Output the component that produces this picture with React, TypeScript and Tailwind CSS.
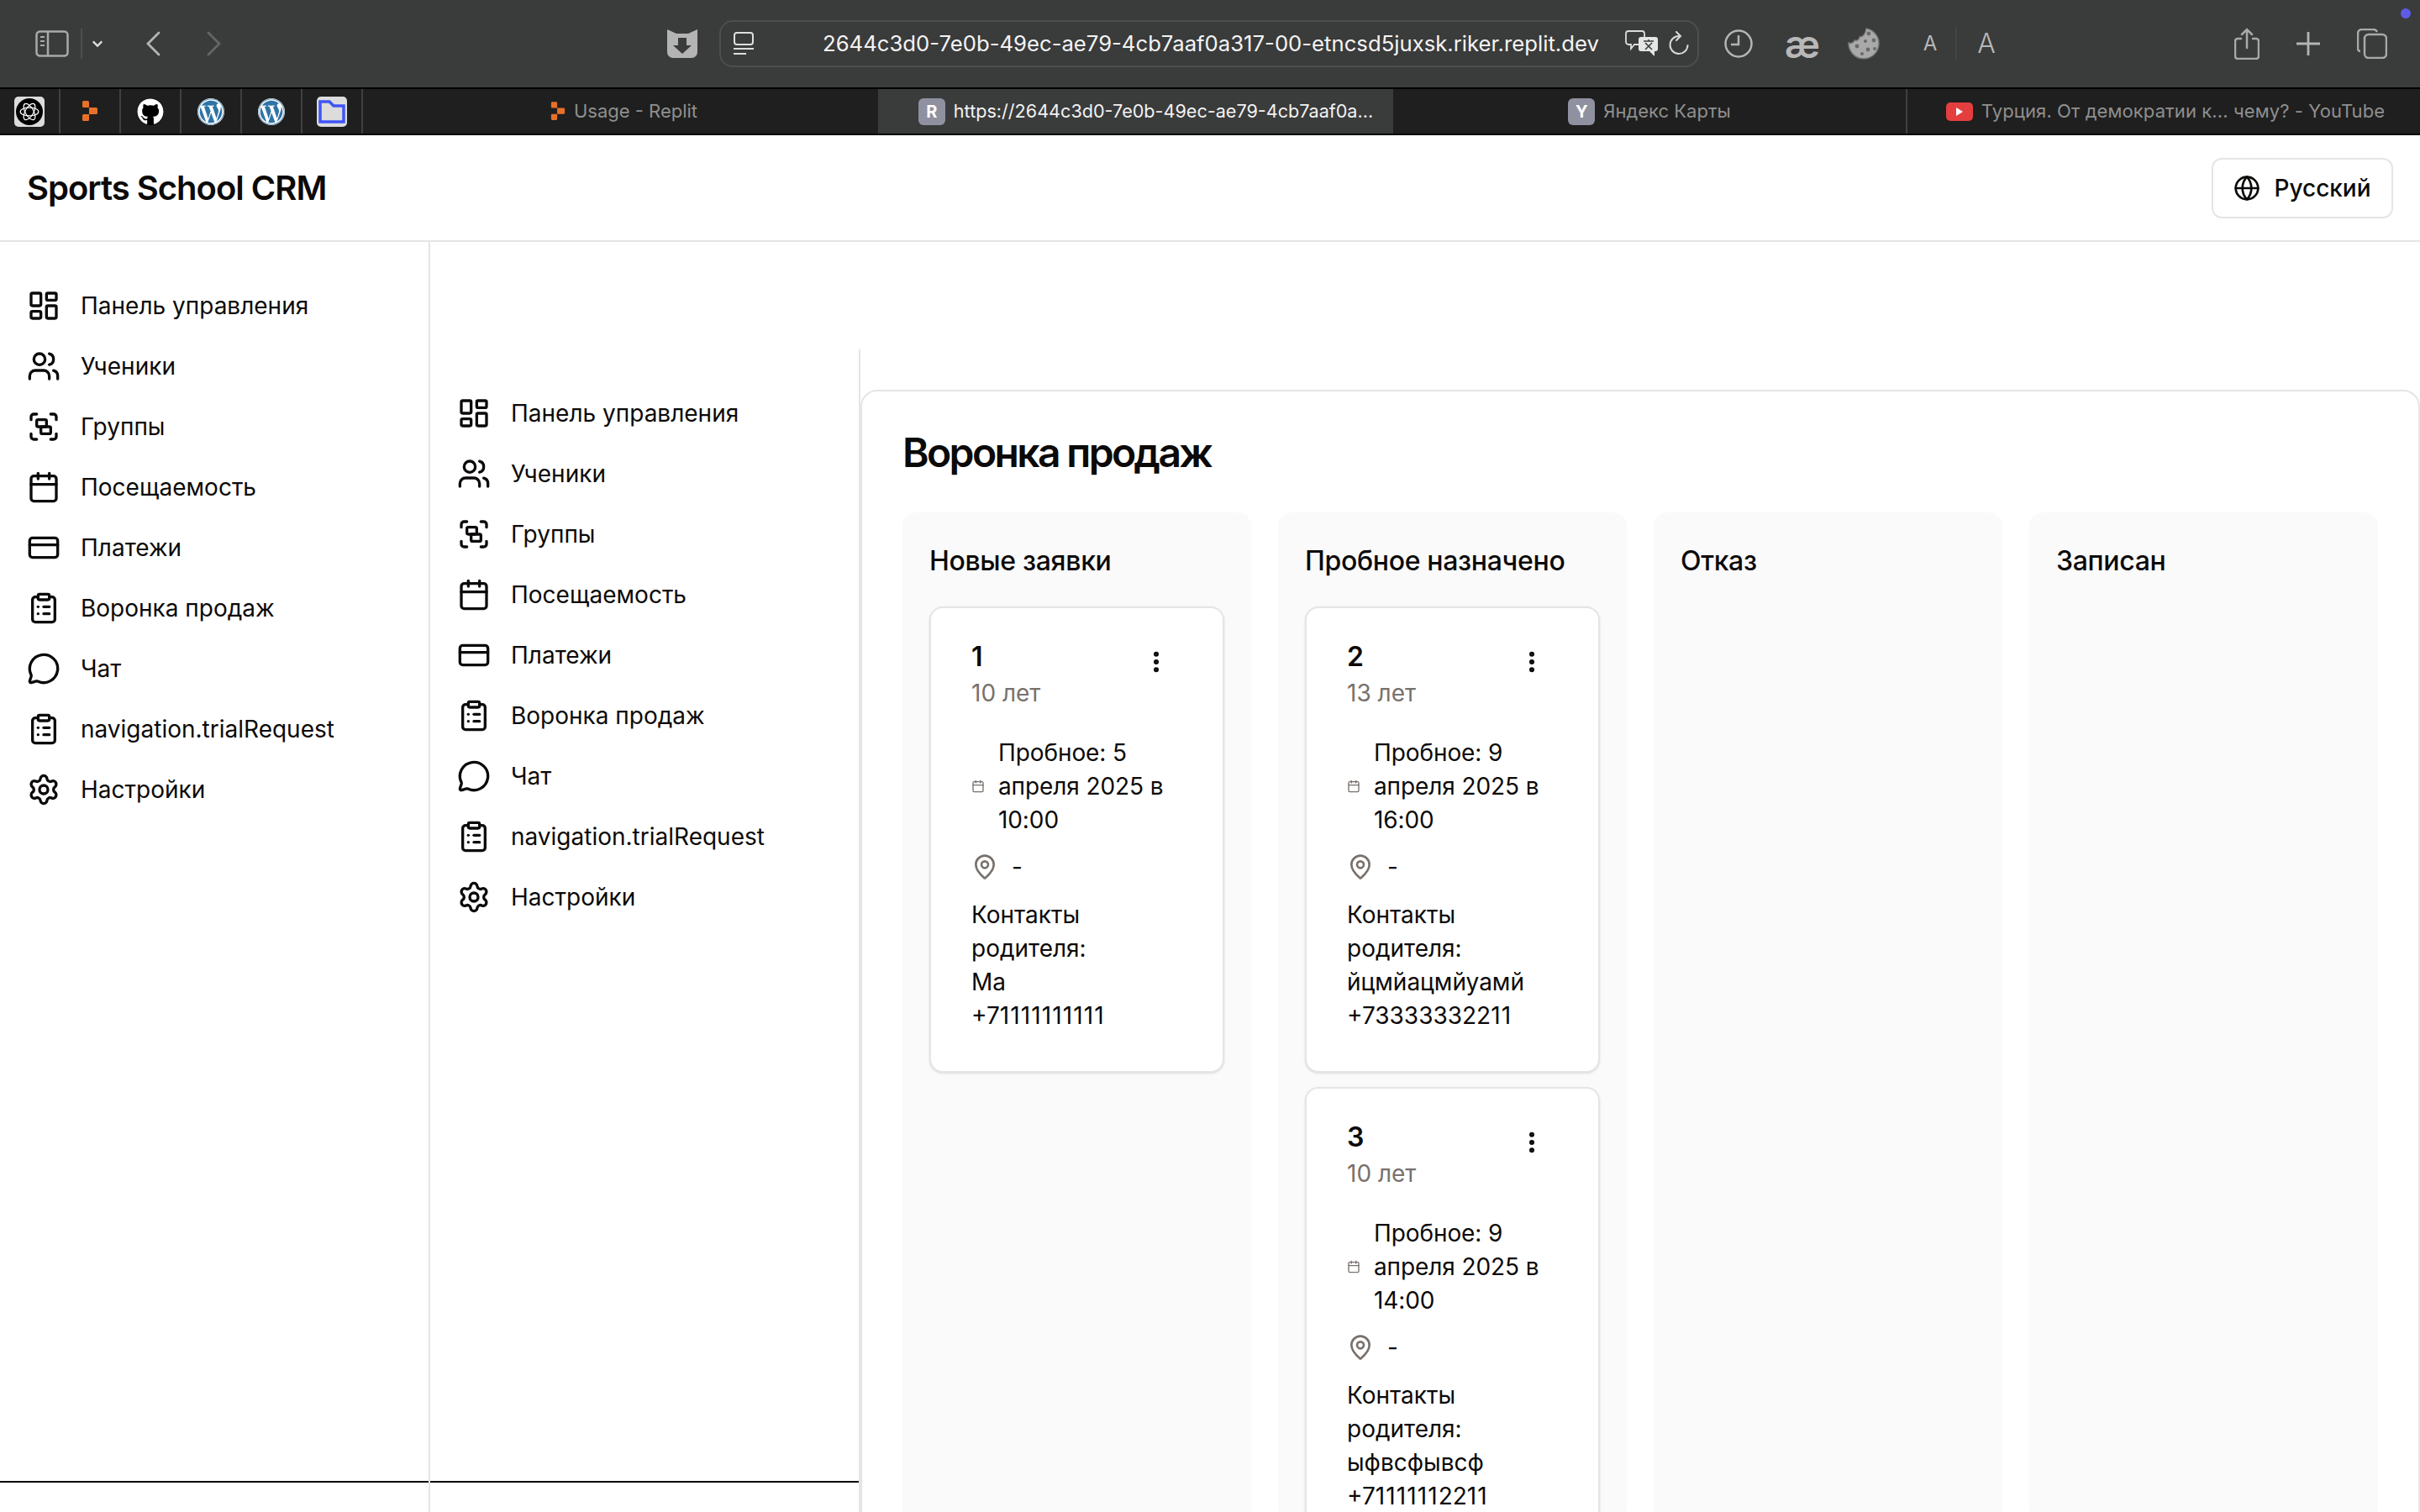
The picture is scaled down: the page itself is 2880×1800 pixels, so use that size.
import {
  Calendar,
  ClipboardList,
  CreditCard,
  Globe,
  Group,
  LayoutDashboard,
  MapPin,
  MessageCircle,
  MoreVertical,
  Settings,
  Users,
} from 'lucide-react'
import { FaGithub, FaWordpress } from 'react-icons/fa'

const NAV_ITEMS = [
  { icon: LayoutDashboard, label: 'Панель управления' },
  { icon: Users, label: 'Ученики' },
  { icon: Group, label: 'Группы' },
  { icon: Calendar, label: 'Посещаемость' },
  { icon: CreditCard, label: 'Платежи' },
  { icon: ClipboardList, label: 'Воронка продаж' },
  { icon: MessageCircle, label: 'Чат' },
  { icon: ClipboardList, label: 'navigation.trialRequest' },
  { icon: Settings, label: 'Настройки' },
]

const COLUMNS = [
  {
    title: 'Новые заявки',
    leads: [{ id: '1', age: '10 лет', trial: 'Пробное: 5 апреля 2025 в 10:00', parent: 'Ма', phone: '+71111111111' }],
  },
  {
    title: 'Пробное назначено',
    leads: [
      { id: '2', age: '13 лет', trial: 'Пробное: 9 апреля 2025 в 16:00', parent: 'йцмйацмйуамй', phone: '+73333332211' },
      { id: '3', age: '10 лет', trial: 'Пробное: 9 апреля 2025 в 14:00', parent: 'ыфвсфывсф', phone: '+71111112211' },
    ],
  },
  { title: 'Отказ', leads: [] },
  { title: 'Записан', leads: [] },
]

function ReplitMark({ className }: { className: string }) {
  return (
    <svg viewBox="0 0 20 26" className={className}>
      <path d="M1 1.5A1.5 1.5 0 0 1 2.500 0h5A1.500 1.500 0 0 1 9 1.500V8H2.500A1.500 1.500 0 0 1 1 6.500Z" fill="#e8702a" />
      <path d="M9 8h8.500A1.500 1.500 0 0 1 19 9.500v5a1.500 1.500 0 0 1-1.500 1.500H9Z" fill="#e8702a" />
      <path d="M2.500 16H9v6.500A1.500 1.500 0 0 1 7.500 24h-5A1.500 1.500 0 0 1 1 22.500v-5A1.500 1.500 0 0 1 2.500 16Z" fill="#e8702a" />
    </svg>
  )
}

function Toolbar() {
  return (
    <div className="flex h-[104px] items-center bg-[#3a3b3b] text-[#bdbdbd]">
      {/* sidebar toggle */}
      <svg viewBox="0 0 40 32" className="ml-[42px] h-[32px] w-[40px]" fill="none" stroke="#a9a9a9" strokeWidth="2.500">
        <rect x="1.500" y="1.500" width="37" height="29" rx="4" />
        <path d="M15 2v28" />
        <path d="M6 8h5M6 13h5M6 18h5" strokeWidth="2" />
      </svg>
      <div className="ml-[14px] h-[36px] w-[2px] bg-[#4d4e4e]" />
      <svg viewBox="0 0 16 10" className="ml-[11px] h-[10px] w-[14px]" fill="none" stroke="#e0e0e0" strokeWidth="2.500">
        <path d="M2 2l6 6 6-6" />
      </svg>
      <svg viewBox="0 0 18 30" className="ml-[50px] h-[30px] w-[18px]" fill="none" stroke="#b5b5b5" strokeWidth="2.800" strokeLinecap="round">
        <path d="M16 2L3 15l13 13" />
      </svg>
      <svg viewBox="0 0 18 30" className="ml-[55px] h-[30px] w-[18px]" fill="none" stroke="#646565" strokeWidth="2.800" strokeLinecap="round">
        <path d="M2 2l13 13L2 28" />
      </svg>
      {/* cat shield */}
      <svg viewBox="0 0 36 36" className="ml-[530px] h-[36px] w-[36px]">
        <path
          d="M0 1l11 5h14l11-5v27a7 7 0 0 1-7 7H7a7 7 0 0 1-7-7Z"
          fill="#b4b4b4"
        />
        <path d="M13 11h10v9h6L18 30 7 20h6Z" fill="#3a3b3b" />
      </svg>
      {/* address bar */}
      <div className="ml-[26px] flex h-[56px] w-[1166px] items-center rounded-[16px] border-2 border-[#4d4e4e]">
        <svg viewBox="0 0 24 28" className="ml-[15px] h-[28px] w-[24px]" fill="none" stroke="#dedede" strokeWidth="2">
          <rect x="1" y="1" width="22" height="14" rx="3" />
          <path d="M0 20h24" />
          <path d="M0 26h15" />
        </svg>
        <span className="ml-[82px] text-[25.700px] leading-none whitespace-nowrap text-[#f4f4f4]">
          2644c3d0-7e0b-49ec-ae79-4cb7aaf0a317-00-etncsd5juxsk.riker.replit.dev
        </span>
        {/* translate */}
        <svg viewBox="0 0 40 32" className="ml-auto h-[32px] w-[40px] shrink-0">
          <path d="M4 1h16a3 3 0 0 1 3 3v10a3 3 0 0 1-3 3H11l-4 5v-5H4a3 3 0 0 1-3-3V4a3 3 0 0 1 3-3Z" fill="none" stroke="#dcdcdc" strokeWidth="1.800" />
          <path d="M19 8h17a3 3 0 0 1 3 3v11a3 3 0 0 1-3 3h-1v6l-6-6H19a3 3 0 0 1-3-3V11a3 3 0 0 1 3-3Z" fill="#e5e5e5" />
          <path d="M22 13h12M28 11v2M24 23l8-8M24 15l8 8" stroke="#3a3b3b" strokeWidth="1.600" fill="none" />
        </svg>
        <svg viewBox="0 0 24 30" className="mr-[10px] ml-[12px] h-[30px] w-[24px] shrink-0" fill="none" stroke="#d8d8d8" strokeWidth="2" strokeLinecap="round">
          <path d="M12 6a10.500 10.500 0 1 0 10.500 11" />
          <path d="M9 1l5 5-5 5" />
        </svg>
      </div>
      {/* clock */}
      <svg viewBox="0 0 34 34" className="ml-[30px] h-[34px] w-[34px]" fill="none" stroke="#b4b4b4" strokeWidth="2.500">
        <circle cx="17" cy="17" r="15.500" />
        <path d="M17 7v11H8" />
      </svg>
      <span className="ml-[38px] w-[38px] text-center text-[46px] leading-none font-semibold text-[#b8b8b8]">æ</span>
      {/* cookie */}
      <svg viewBox="0 0 38 38" className="ml-[37px] h-[38px] w-[38px]">
        <path
          d="M22 1a18 18 0 1 1-21 17c3 1 6 0 7-3 3 1 6-1 6-4 4 0 7-4 8-10Z"
          fill="#a9a9a9"
          stroke="#767676"
          strokeWidth="1.500"
        />
        <circle cx="25" cy="7" r="2.400" fill="#6a6a6a" />
        <circle cx="31" cy="15" r="2.400" fill="#6a6a6a" />
        <circle cx="21" cy="16" r="2" fill="#6a6a6a" />
        <circle cx="11" cy="22" r="2.400" fill="#6a6a6a" />
        <circle cx="24" cy="26" r="2.400" fill="#6a6a6a" />
        <circle cx="32" cy="25" r="2" fill="#6a6a6a" />
        <circle cx="17" cy="31" r="2" fill="#6a6a6a" />
      </svg>
      <span className="ml-[49px] w-[22px] text-center text-[24px] leading-none text-[#b8b8b8]">A</span>
      <div className="ml-[19px] h-[40px] w-[2px] bg-[#444545]" />
      <span className="ml-[22px] w-[26px] text-center text-[32px] leading-none font-light text-[#b8b8b8]">A</span>
      {/* share */}
      <svg viewBox="0 0 30 38" className="ml-[282px] h-[38px] w-[30px]" fill="none" stroke="#a9a9a9" strokeWidth="2.500" strokeLinecap="round">
        <path d="M8 13H4a3 3 0 0 0-3 3v18a3 3 0 0 0 3 3h22a3 3 0 0 0 3-3V16a3 3 0 0 0-3-3h-4" />
        <path d="M15 24V2M9 8l6-6 6 6" />
      </svg>
      <svg viewBox="0 0 28 28" className="ml-[44px] h-[28px] w-[28px]" fill="none" stroke="#b4b4b4" strokeWidth="2.800">
        <path d="M14 0v28M0 14h28" />
      </svg>
      <svg viewBox="0 0 36 36" className="ml-[44px] h-[36px] w-[36px]" fill="none" stroke="#a9a9a9" strokeWidth="2.500">
        <rect x="9" y="7" width="26" height="28" rx="5" />
        <path d="M4 27a3 3 0 0 1-3-3V6a5 5 0 0 1 5-5h14a5 5 0 0 1 4 3" />
      </svg>
      <div className="relative h-full flex-1">
        <div className="absolute top-[10px] left-[16px] h-[12px] w-[12px] rounded-full bg-[#5e5ce6]" />
      </div>
    </div>
  )
}

function PinnedTab({ children }: { children: React.ReactNode }) {
  return (
    <div className="flex h-full w-[72px] items-center justify-center border-r-2 border-[#3f4040]">
      {children}
    </div>
  )
}

function TabBar() {
  return (
    <div className="flex h-[57px] items-stretch border-y-2 border-black bg-[#1f1f1f] text-[22px]">
      <PinnedTab>
        <div className="flex h-[36px] w-[36px] items-center justify-center rounded-[5px] bg-[#dcdcdc]">
          <div className="flex h-[32px] w-[32px] items-center justify-center rounded-full bg-black">
            <svg viewBox="0 0 24 24" className="h-[26px] w-[26px]" fill="none" stroke="#fff" strokeWidth="1.100">
              <ellipse cx="12" cy="12" rx="10" ry="4.500" />
              <ellipse cx="12" cy="12" rx="10" ry="4.500" transform="rotate(60 12 12)" />
              <ellipse cx="12" cy="12" rx="10" ry="4.500" transform="rotate(120 12 12)" />
            </svg>
          </div>
        </div>
      </PinnedTab>
      <PinnedTab>
        <ReplitMark className="h-[26px] w-[20px]" />
      </PinnedTab>
      <PinnedTab>
        <FaGithub className="h-[32px] w-[32px] rounded-full bg-black text-white" />
      </PinnedTab>
      <PinnedTab>
        <FaWordpress className="h-[32px] w-[32px] rounded-full bg-white text-[#2f74a6]" />
      </PinnedTab>
      <PinnedTab>
        <FaWordpress className="h-[32px] w-[32px] rounded-full bg-white text-[#2f74a6]" />
      </PinnedTab>
      <PinnedTab>
        <div className="flex h-[36px] w-[36px] items-center justify-center rounded-[5px] bg-[#dcdcdc]">
          <svg viewBox="0 0 32 28" className="h-[28px] w-[32px]" fill="none" stroke="#3f55f5" strokeWidth="3.500">
            <path d="M2 26V2h11l5 5h12v19Z" />
          </svg>
        </div>
      </PinnedTab>
      <div className="flex w-[613px] items-center justify-center gap-[10px] pl-[8px] text-[#8f8f8f]">
        <ReplitMark className="h-[24px] w-[18px]" />
        <span>Usage - Replit</span>
      </div>
      <div className="flex w-[613px] items-center justify-center gap-[10px] bg-[#3a3b3b] pl-[24px] text-[21.600px] text-[#f2f2f2]">
        <div className="flex h-[32px] w-[32px] items-center justify-center rounded-[6px] bg-[#8f90a0] text-[20px] font-bold text-white">R</div>
        <span>https://2644c3d0-7e0b-49ec-ae79-4cb7aaf0a...</span>
      </div>
      <div className="flex w-[612px] items-center justify-center gap-[10px] border-r-2 border-[#3f4040] text-[#8f8f8f]">
        <div className="flex h-[32px] w-[32px] items-center justify-center rounded-[6px] bg-[#8f90a0] text-[20px] font-bold text-white">Y</div>
        <span>Яндекс Карты</span>
      </div>
      <div className="flex flex-1 items-center justify-center gap-[10px] pl-[4px] text-[#8f8f8f]">
        <div className="flex h-[22px] w-[32px] items-center justify-center rounded-[5px] bg-[#e53e3e]">
          <div className="h-0 w-0 border-y-[5px] border-l-[8px] border-y-transparent border-l-white" />
        </div>
        <span className="tracking-[0.1px]">Турция. От демократии к... чему? - YouTube</span>
      </div>
    </div>
  )
}

function SidebarNav() {
  return (
    <div className="flex h-full w-[512px] shrink-0 flex-col border-r-2 border-[#e5e5e5]">
      <nav className="flex flex-col pt-[40px] pl-[32px]">
        {NAV_ITEMS.map((item) => (
          <div key={item.label} className="flex h-[72px] items-center gap-[24px]">
            <item.icon className="h-[40px] w-[40px] shrink-0 text-[#0c0a09]" strokeWidth={2} />
            <span className="text-[28px] leading-[40px] text-[#0c0a09]">{item.label}</span>
          </div>
        ))}
      </nav>
      <div className="mt-auto mb-[35px] border-t-2 border-black" />
    </div>
  )
}

type Lead = { id: string; age: string; trial: string; parent: string; phone: string }

// the reference's font sets runs of 1 wider than Inter here does
function Phone({ value }: { value: string }) {
  return (
    <div>
      {value.split(/(1+)/).map((part, i) =>
        part.startsWith('1') ? (
          <span key={i} className="tracking-[1.100px]">
            {part}
          </span>
        ) : (
          <span key={i}>{part}</span>
        ),
      )}
    </div>
  )
}

function LeadCard({ lead }: { lead: Lead }) {
  return (
    <div className="rounded-[16px] border-2 border-[#e5e5e5] bg-white px-[48px] pt-[38px] pb-[46px] shadow-sm">
      <div className="flex items-start justify-between">
        <div>
          <div className="text-[32px] leading-[40px] font-semibold text-[#0c0a09]">{lead.id}</div>
          <div className="mt-[3px] text-[28px] leading-[40px] text-[#78716c]">{lead.age}</div>
        </div>
        <MoreVertical className="mt-[10px] mr-[15px] h-[32px] w-[32px] text-[#0c0a09]" strokeWidth={2.500} />
      </div>
      <div className="mt-[31px] flex items-center gap-[16px] text-[28px] leading-[40px] tracking-[-0.1px] text-[#0c0a09]">
        <Calendar className="h-[16px] w-[16px] shrink-0 text-[#78716c]" />
        <span>{lead.trial}</span>
      </div>
      <div className="mt-[12px] flex h-[48px] items-center gap-[16px] text-[28px] text-[#0c0a09]">
        <MapPin className="h-[32px] w-[32px] shrink-0 text-[#78716c]" />
        <span>-</span>
      </div>
      <div className="mt-[13px] text-[28px] leading-[40px] text-[#0c0a09]">
        <div>Контакты родителя:</div>
        <div>{lead.parent}</div>
        <Phone value={lead.phone} />
      </div>
    </div>
  )
}

function SalesFunnel() {
  return (
    <div className="mt-[48px] h-[1400px] flex-1 rounded-[20px] border-2 border-[#e5e5e5] bg-white px-[48px] pt-[45px]">
      <h1 className="text-[48px] leading-[56px] font-semibold tracking-[-0.055em] text-[#0c0a09]">Воронка продаж</h1>
      <div className="mt-[43px] grid grid-cols-4 gap-[32px]">
        {COLUMNS.map((col) => (
          <div key={col.title} className="h-[1200px] rounded-[16px] bg-[#fafafa] px-[32px] pt-[38px]">
            <h2 className="mb-[34px] text-[32px] leading-[40px] font-medium tracking-[-0.33px] text-[#0c0a09]">{col.title}</h2>
            <div className="flex flex-col gap-[17px]">
              {col.leads.map((lead) => (
                <LeadCard key={lead.id} lead={lead} />
              ))}
            </div>
          </div>
        ))}
      </div>
    </div>
  )
}

export default function App() {
  return (
    <div className="flex h-[1800px] w-[2880px] flex-col overflow-hidden bg-white font-['Inter',sans-serif]">
      <Toolbar />
      <TabBar />
      <header className="flex h-[127px] shrink-0 items-center justify-between border-b-2 border-[#e5e5e5] px-[32px]">
        <span className="text-[40px] font-semibold tracking-tight text-[#0c0a09]">Sports School CRM</span>
        <button className="flex h-[72px] w-[216px] items-center justify-center gap-[16px] rounded-[12px] border-2 border-[#e5e5e5] text-[28px] font-medium text-[#0c0a09]">
          <Globe className="h-[32px] w-[32px]" />
          Русский
        </button>
      </header>
      <div className="flex min-h-0 flex-1">
        <SidebarNav />
        <div className="flex min-w-0 flex-1 pt-[128px]">
          <SidebarNav />
          <SalesFunnel />
        </div>
      </div>
    </div>
  )
}
